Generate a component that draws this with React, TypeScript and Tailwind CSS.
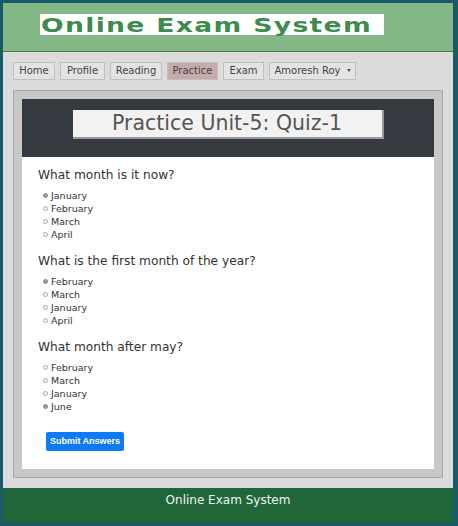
import React from "react";

type Question = {
    text: string;
    options: string[];
    checked: number;
};

const questions: Question[] = [
    { text: "What month is it now?", options: ["January", "February", "March", "April"], checked: 0 },
    { text: "What is the first month of the year?", options: ["February", "March", "January", "April"], checked: 0 },
    { text: "What month after may?", options: ["February", "March", "January", "June"], checked: 3 },
];

const navItems = [
    { label: "Home", w: "w-[42px]" },
    { label: "Profile", w: "w-[45px]" },
    { label: "Reading", w: "w-[52px]" },
    { label: "Practice", w: "w-[51px]" },
    { label: "Exam", w: "w-[41px]" },
];

function Radio({ on }: { on: boolean }) {
    return (
        <span
            className={
                "mr-[3px] mt-[-3px] inline-block h-[5px] w-[5px] rounded-full border " +
                (on ? "border-[#8a8a8a] bg-[#9a9a9a]" : "border-[#a5a5a5] bg-white")
            }
        />
    );
}

export default function App() {
    return (
        <div
            className="flex h-[526px] w-[458px] flex-col bg-[#18596a] pb-[3px] pl-[3px] pr-[5px] pt-[3px]"
            style={{ fontFamily: '"DejaVu Sans", Verdana, sans-serif' }}
        >
            {/* header */}
            <header className="h-[49px] shrink-0 border-b border-[#4e7a57] bg-[#84b886] pl-[37px] pt-[11px]">
                <div className="flex h-[21px] w-[344px] items-center bg-white pl-[1px]">
                    <span className="origin-left scale-x-[1.33] whitespace-nowrap text-[20px] font-black leading-none tracking-[1px] text-[#3d8b4f]">
                        Online Exam System
                    </span>
                </div>
            </header>

            <main className="flex flex-1 flex-col bg-[#dcdcdc] px-[10px] pt-[10px]">
                <nav className="flex gap-[5px]">
                    {navItems.map((n) => (
                        <button
                            key={n.label}
                            type="button"
                            className={
                                "h-[18px] border border-[#c0c0c0] text-[10px] leading-none text-[#444] " +
                                n.w +
                                (n.label === "Practice" ? " bg-[#c5abab]" : " bg-[#e3e3e3]")
                            }
                        >
                            {n.label}
                        </button>
                    ))}
                    <button
                        type="button"
                        className="flex h-[18px] w-[87px] items-center justify-center gap-[6px] border border-[#c0c0c0] bg-[#e3e3e3] text-[10px] leading-none text-[#444]"
                    >
                        Amoresh Roy
                        <span className="mt-[-1px] border-x-[2.5px] border-t-[3px] border-x-transparent border-t-[#555]" />
                    </button>
                </nav>

                <section className="mt-[10px] h-[388px] border border-[#a8a8a8] bg-[#c8c8c8] p-[8px]">
                    <div className="flex h-[58px] items-start justify-center bg-[#343a40] pt-[11px]">
                        <div className="flex h-[29px] w-[311px] items-center justify-center border-b-2 border-r-2 border-[#9a9a9a] bg-[#f2f2f2] text-[20.5px] text-[#555]">
                            Practice Unit-5: Quiz-1
                        </div>
                    </div>

                    <div className="h-[312px] bg-white pl-[16px] pt-[10px]">
                        {questions.map((q, qi) => (
                            <div key={qi} className="mb-[11px]">
                                <p className="mb-[6px] text-[12.2px] leading-[17px] text-[#333]">{q.text}</p>
                                {q.options.map((o, oi) => (
                                    <label key={o} className="flex h-[13px] items-center pl-[5px] text-[9.5px] text-[#333]">
                                        <Radio on={oi === q.checked} />
                                        {o}
                                    </label>
                                ))}
                            </div>
                        ))}
                        <button
                            type="button"
                            className="ml-[8px] mt-[7px] h-[19px] w-[78px] whitespace-nowrap rounded-[2px] bg-[#0d7bf5] font-['Liberation_Sans',Arial,sans-serif] text-[9px] font-bold text-white"
                        >
                            Submit Answers
                        </button>
                    </div>
                </section>
            </main>

            <footer className="h-[35px] shrink-0 bg-[#216639] pt-[3px] text-center text-[12px] text-[#eef5ee]">
                Online Exam System
            </footer>
        </div>
    );
}
